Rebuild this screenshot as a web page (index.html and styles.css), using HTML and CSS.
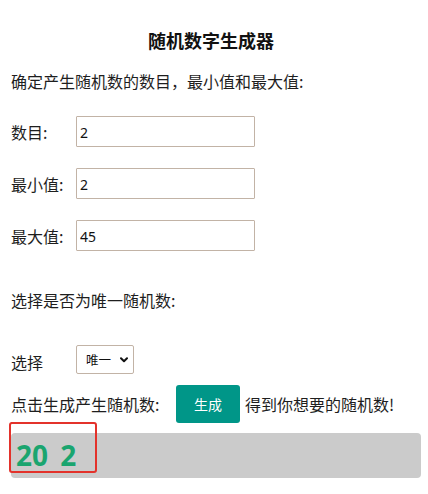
FILE: index.html
```html
<!DOCTYPE html>
<html lang="zh-CN">
<head>
<meta charset="utf-8">
<title>随机数字生成器</title>
<link rel="stylesheet" href="styles.css">
</head>
<body>
<div class="page">
  <h2 class="title">随机数字生成器</h2>
  <p class="intro">确定产生随机数的数目，最小值和最大值:</p>
  <div class="field">
    <label class="label">数目:</label>
    <input class="num" type="text" value="2">
  </div>
  <div class="field">
    <label class="label">最小值:</label>
    <input class="num" type="text" value="2">
  </div>
  <div class="field">
    <label class="label">最大值:</label>
    <input class="num" type="text" value="45">
  </div>
  <p class="question">选择是否为唯一随机数:</p>
  <div class="field select-row">
    <label class="label">选择</label>
    <span class="select-wrap">
      <select class="pick">
        <option>唯一</option>
        <option>不唯一</option>
      </select>
      <svg class="chev" width="8" height="6" viewBox="0 0 8 6"><path d="M1 1.2 L4 4.2 L7 1.2" fill="none" stroke="#111" stroke-width="2" stroke-linecap="round" stroke-linejoin="round"/></svg>
    </span>
  </div>
  <div class="gen-row">
    <span class="gen-text">点击生成产生随机数:</span>
    <button class="btn" type="button">生成</button>
    <span class="after">得到你想要的随机数!</span>
  </div>
  <div class="result">
    <span class="nums">20 2</span>
    <span class="highlight"></span>
  </div>
</div>
</body>
</html>
```
FILE: styles.css
```css
html, body {
  margin: 0;
  padding: 0;
  background: #fff;
}
body {
  font-family: "Noto Sans CJK SC", "Noto Sans", sans-serif;
  color: #1e1e1e;
  font-size: 16px;
}
.page {
  padding: 28px 7px 0 11px;
  width: 410px;
}
.title {
  margin: 0;
  width: 400px;
  text-align: center;
  font-size: 18px;
  line-height: 24px;
  font-weight: 700;
  color: #111;
}
.intro {
  margin: 17px 0 0;
  line-height: 24px;
  font-size: 16px;
}
.field {
  display: flex;
  align-items: center;
  height: 31px;
  margin-top: 21px;
}
.intro + .field {
  margin-top: 23px;
}
.label {
  width: 65px;
  line-height: 24px;
  font-size: 16px;
}
.num {
  box-sizing: border-box;
  width: 179px;
  height: 31px;
  border: 1px solid #c2b3a6;
  border-radius: 1px;
  padding: 2px 3px 0;
  font-family: "Noto Sans", "Noto Sans CJK SC", sans-serif;
  font-size: 14px;
  color: #111;
  outline: none;
  background: #fff;
}
.question {
  margin: 37px 0 0;
  line-height: 24px;
}
.select-row {
  margin-top: 33px;
  height: 29px;
  align-items: center;
}
.select-row .label {
  padding-top: 5px;
}
.select-wrap {
  position: relative;
  display: inline-block;
  height: 29px;
}
.pick {
  -webkit-appearance: none;
  appearance: none;
  box-sizing: border-box;
  width: 58px;
  height: 29px;
  border: 1px solid #c2b3a6;
  border-radius: 2px;
  padding: 0 0 0 9px;
  font-family: "Noto Sans CJK SC", sans-serif;
  font-size: 12.5px;
  color: #111;
  background: #fff;
  outline: none;
}
.chev {
  position: absolute;
  right: 6px;
  top: 12px;
  pointer-events: none;
}
.gen-row {
  display: flex;
  align-items: center;
  margin-top: 11px;
  height: 38px;
}
.gen-text {
  width: 165px;
  line-height: 24px;
}
.btn {
  width: 64px;
  height: 38px;
  border: none;
  border-radius: 3px;
  background: #009688;
  color: #fff;
  font-family: "Noto Sans CJK SC", sans-serif;
  font-size: 14px;
  padding: 0;
  margin-right: 5px;
}
.after {
  line-height: 24px;
}
.result {
  position: relative;
  margin-top: 10px;
  width: 410px;
  height: 45px;
  background: #cbcbcb;
  border-radius: 4px;
  display: flex;
  align-items: center;
}
.nums {
  padding-left: 5px;
  font-family: "Noto Sans", sans-serif;
  font-weight: 700;
  font-size: 28px;
  word-spacing: 5px;
  line-height: 45px;
  color: #1aa56f;
}
.highlight {
  position: absolute;
  left: -2px;
  top: -11px;
  width: 84px;
  height: 47px;
  border: 2px solid #e3322b;
  border-radius: 3px;
}
```
